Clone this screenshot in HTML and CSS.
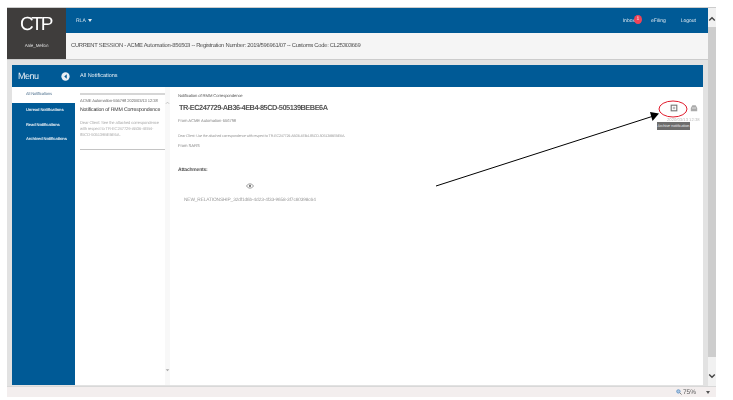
FILE: index.html
```html
<!DOCTYPE html>
<html lang="en">
<head>
<meta charset="utf-8">
<title>CTP - All Notifications</title>
<link rel="stylesheet" href="styles.css">
</head>
<body>
<div class="page">
  <div class="window">
    <div class="app">
      <header class="top">
        <div class="brand">
          <div class="logo">CTP</div>
          <div class="user">Aale_Mellon</div>
        </div>
        <div class="top-right">
          <nav class="nav">
            <span class="rla">RLA <i class="caret"></i></span>
            <div class="links">
              <span class="inbox">Inbox<b class="badge">1</b></span>
              <span class="efiling">eFiling</span>
              <span class="logout">Logout</span>
            </div>
          </nav>
          <div class="session">CURRENT SESSION - ACME Automation-856503 -- Registration Number: 2019/596961/07 -- Customs Code: CL25303669</div>
        </div>
      </header>
      <div class="workspace">
        <div class="panel">
          <div class="panel-head">
            <div class="menu-title">
              <span>Menu</span>
              <svg class="menu-icon" viewBox="0 0 10 10"><circle cx="5" cy="5" r="4.6" fill="#e9eef3"/><path d="M6.4 2.6 3.6 5l2.8 2.4z" fill="#005a96"/></svg>
            </div>
            <div class="crumb">All Notifications</div>
          </div>
          <div class="panel-body">
            <aside class="sidebar">
              <div class="side-item active">All Notifications</div>
              <div class="side-item">Unread Notifications</div>
              <div class="side-item">Read Notifications</div>
              <div class="side-item">Archived Notifications</div>
            </aside>
            <section class="list">
              <div class="list-inner">
                <article class="card">
                  <div class="card-meta">ACME Automation-556798 2020/03/13 12:38</div>
                  <div class="card-title">Notification of RMM Correspondence</div>
                  <p class="card-text">Dear Client: See the attached correspondence with respect to TR-EC247729-AB36-4EB4-85CD-505139BEBE6A.</p>
                </article>
              </div>
              <div class="list-scroll">
                <svg viewBox="0 0 6 4"><path d="M1 3 3 1l2 2" fill="none" stroke="#bbb"/></svg>
                <svg viewBox="0 0 6 4"><path d="M.8 1h4.4L3 3.4z" fill="#aaa"/></svg>
              </div>
            </section>
            <section class="detail">
              <div class="detail-head">
                <div class="detail-titles">
                  <div class="kicker">Notification of RMM Correspondence</div>
                  <h1 class="ref">TR-EC247729-AB36-4EB4-85CD-505139BEBE6A</h1>
                </div>
                <div class="tools">
                  <div class="tool-icons">
                    <svg class="tool" viewBox="0 0 10 10"><rect x="1.5" y="1.5" width="7" height="7" fill="none" stroke="#777" stroke-width="1.4"/><rect x="3.5" y="3.5" width="3" height="3" fill="#bbb"/></svg>
                    <svg class="tool" viewBox="0 0 10 10"><path d="M1 9V5l2-3.5h4L9 5v4z" fill="#aaa"/><path d="M2.5 5h5" stroke="#eee"/></svg>
                  </div>
                  <div class="stamp">2020/03/13 12:38</div>
                  <div class="tooltip">Archive notification</div>
                </div>
              </div>
              <p class="line from">From ACME Automation-556798</p>
              <p class="line dear">Dear Client: Use the attached correspondence with respect to TR-EC247729-AB36-4EB4-85CD-505139BEBE6A.</p>
              <p class="line sars">From SARS</p>
              <div class="attach-title">Attachments:</div>
              <div class="attach">
                <svg class="eye" viewBox="0 0 12 8"><path d="M.7 4C2 1.800 4 .8 6 .8s4 1 5.300 3.200C10 6.200 8 7.200 6 7.200S2 6.200.7 4z" fill="none" stroke="#666" stroke-width=".9"/><circle cx="6" cy="4" r="1.700" fill="#777"/></svg>
                <div class="file">NEW_RELATIONSHIP_32df1d6b-4d23-4f33-9658-3f7c60398c64</div>
              </div>
            </section>
          </div>
        </div>
      </div>
    </div>
    <div class="scrollbar">
      <svg viewBox="0 0 8 6"><path d="M1.200 4.500 4 1.800l2.800 2.700" fill="none" stroke="#444" stroke-width="1.400"/></svg>
      <div class="thumb-track"><div class="thumb"></div></div>
      <svg viewBox="0 0 8 6"><path d="M1.200 1.500 4 4.200l2.800-2.700" fill="none" stroke="#444" stroke-width="1.400"/></svg>
    </div>
  </div>
  <footer class="status">
    <svg class="zoom-icon" viewBox="0 0 8 8"><circle cx="3.200" cy="3.200" r="2.300" fill="#a9c6e4" stroke="#5c8fc2"/><path d="M5 5l2.400 2.400" stroke="#777" stroke-width="1.200"/></svg>
    <span class="zoom-val">75%</span>
    <i class="status-caret"></i>
  </footer>
  <svg class="callout" viewBox="0 0 733 400" aria-hidden="true">
    <ellipse cx="673" cy="109" rx="14" ry="8" fill="none" stroke="#e01b2c" stroke-width="1"/>
    <path d="M436 186 652 116.500" stroke="#000" stroke-width="1" fill="none"/>
    <path d="M659 113.500 650 112 652.500 121z" fill="#000"/>
  </svg>
</div>
</body>
</html>
```

FILE: styles.css
```css
* { box-sizing: border-box; }
html, body { margin: 0; height: 100%; background: #fff; overflow: hidden; }
body { font-family: "Liberation Sans", Arial, sans-serif; color: #555; text-rendering: geometricPrecision; }
p, h1 { margin: 0; }

.page {
  position: relative;
  width: 733px;
  height: 400px;
  padding: 7px 17px 3px 7px;
  display: flex;
  flex-direction: column;
}
.window { flex: 1; display: flex; min-height: 0; border-top: 1px solid #ccc; }
.app { width: 701px; display: flex; flex-direction: column; filter: blur(.35px); }

.top { display: flex; height: 51px; }
.brand { width: 59px; background: #3f3d3c; color: #fff; text-align: center; }
.logo { font-size: 19px; line-height: 19px; padding-top: 7px; letter-spacing: -2.300px; padding-right: 2px; }
.user { font-size: 4.500px; line-height: 6px; margin-top: 9px; color: #ddd; letter-spacing: -.1px; }
.top-right { flex: 1; display: flex; flex-direction: column; }
.nav {
  height: 25px;
  background: #005a96;
  color: #dfe9f1;
  display: flex;
  align-items: center;
  justify-content: space-between;
  padding: 0 12px 0 10px;
  font-size: 5px;
}
.caret {
  display: inline-block;
  border: 2px solid transparent;
  border-top: 3px solid #dfe9f1;
  border-bottom: 0;
  margin-left: 1px;
  vertical-align: middle;
}
.links { display: flex; align-items: center; }
.inbox { display: flex; align-items: center; }
.badge {
  width: 8px; height: 9px;
  border-radius: 50%;
  background: #ef4458;
  color: #fff;
  font-size: 5px;
  font-weight: normal;
  line-height: 9px;
  text-align: center;
  margin: -3px 0 0 -1px;
}
.efiling { margin-left: 9px; }
.logout { margin-left: 15px; }
.session {
  flex: 1;
  background: #f5f5f5;
  color: #4a4a4a;
  font-size: 5.800px;
  letter-spacing: -.25px;
  display: flex;
  align-items: center;
  padding-left: 5px;
  white-space: nowrap;
}

.workspace { flex: 1; min-height: 0; background: #e2e2e2; border-top: 1px solid #ccc; padding: 5px 5px 1px; }
.panel { height: 100%; display: flex; flex-direction: column; background: #fff; }
.panel-head { height: 22px; background: #005a96; color: #e6eef4; display: flex; align-items: center; flex: none; }
.menu-title { width: 63px; display: flex; align-items: center; justify-content: space-between; padding: 0 3px 0 6px; font-size: 9px; letter-spacing: -.5px; }
.menu-icon { width: 9px; height: 9px; margin-right: 2px; }
.crumb { font-size: 5.500px; padding-left: 5px; }

.panel-body { flex: 1; display: flex; min-height: 0; }
.sidebar { width: 63px; background: #005a96; flex: none; font-size: 4.100px; color: #e6eef4; font-weight: bold; }
.side-item { height: 14.500px; line-height: 14px; padding-left: 14px; letter-spacing: -.12px; white-space: nowrap; }
.side-item.active { background: #fff; color: #4d6f8d; height: 16px; font-weight: normal; }

.list { width: 95px; flex: none; display: flex; }
.list-inner { flex: 1; padding: 6px 0 0 5px; }
.card { border-top: 2px solid #d6d6d6; border-bottom: 1px solid #c4c4c4; height: 57px; width: 85px; padding-top: 3px; }
.card-meta { font-size: 4.100px; line-height: 6px; color: #666; white-space: nowrap; letter-spacing: -.1px; }
.card-title { font-size: 5.200px; line-height: 8px; margin-top: 2px; color: #333; white-space: nowrap; letter-spacing: -.14px; }
.card-text { font-size: 4.100px; line-height: 6px; margin-top: 6px; color: #aaa; width: 84px; letter-spacing: -.12px; }
.list-scroll {
  width: 5px;
  background: #f8f8f8;
  display: flex;
  flex-direction: column;
  justify-content: space-between;
  padding: 14px 0 13px;
}
.list-scroll svg { width: 5px; height: 4px; display: block; }

.detail { flex: 1; padding: 6px 0 0 8px; min-width: 0; }
.detail-head { display: flex; justify-content: space-between; height: 23px; }
.kicker { font-size: 4.200px; line-height: 6px; color: #555; letter-spacing: -.12px; }
.ref { font-size: 7.400px; line-height: 11px; margin-top: 3px; padding-left: 1px; font-weight: bold; color: #555; white-space: nowrap; letter-spacing: -.5px; }
.tools { position: relative; width: 42px; padding-top: 11px; margin-right: 4px; }
.tool-icons { display: flex; gap: 12px; padding-left: 13px; }
.tool { width: 8px; height: 8px; display: block; }
.stamp { font-size: 4.200px; line-height: 5px; color: #bbb; margin: 5px 0 0 10px; white-space: nowrap; }
.tooltip {
  position: absolute;
  left: 0; top: 29px;
  width: 33px; height: 8px;
  background: #6d6d6d;
  color: #eee;
  font-size: 3.800px;
  line-height: 8px;
  text-align: center;
  white-space: nowrap;
}
.line { font-size: 4.200px; line-height: 6px; color: #999; white-space: nowrap; letter-spacing: -.08px; }
.from { margin-top: 2px; color: #888; }
.dear { margin-top: 9px; font-size: 3.700px; letter-spacing: -.18px; }
.sars { margin-top: 4px; color: #888; }
.attach-title { font-size: 5px; line-height: 7px; font-weight: bold; color: #555; margin-top: 18px; letter-spacing: -.2px; }
.attach { width: 152px; margin-top: 9px; text-align: center; }
.eye { width: 8px; height: 6px; display: block; margin: 0 auto; position: relative; left: -4px; }
.file { font-size: 4.800px; line-height: 7px; color: #9a9a9a; margin-top: 8px; white-space: nowrap; padding-left: 6px; text-align: left; letter-spacing: -.13px; }

.scrollbar { width: 8px; background: #f1f1f1; display: flex; flex-direction: column; align-items: center; flex: none; }
.scrollbar svg { width: 8px; height: 6px; flex: none; margin: 8px 0 5px; display: block; }
.scrollbar svg:last-child { margin: 16px 0 7px; }
.thumb-track { flex: 1; width: 100%; min-height: 0; }
.thumb { height: 100%; background: #cdcdcd; }

.status {
  height: 11px;
  margin-right: 0;
  background: #f3eeee;
  display: flex;
  align-items: center;
  justify-content: flex-end;
  padding-right: 5px;
  font-size: 6.500px;
  color: #555;
  border-top: 1px solid #d8d8d8;
  filter: blur(.3px);
}
.zoom-icon { width: 6px; height: 6px; }
.zoom-val { margin: 0 10px 0 1px; }
.status-caret { border: 2px solid transparent; border-top: 3px solid #555; border-bottom: 0; margin-right: 1px; }

.callout { position: absolute; left: 0; top: 0; width: 733px; height: 400px; pointer-events: none; }
```
